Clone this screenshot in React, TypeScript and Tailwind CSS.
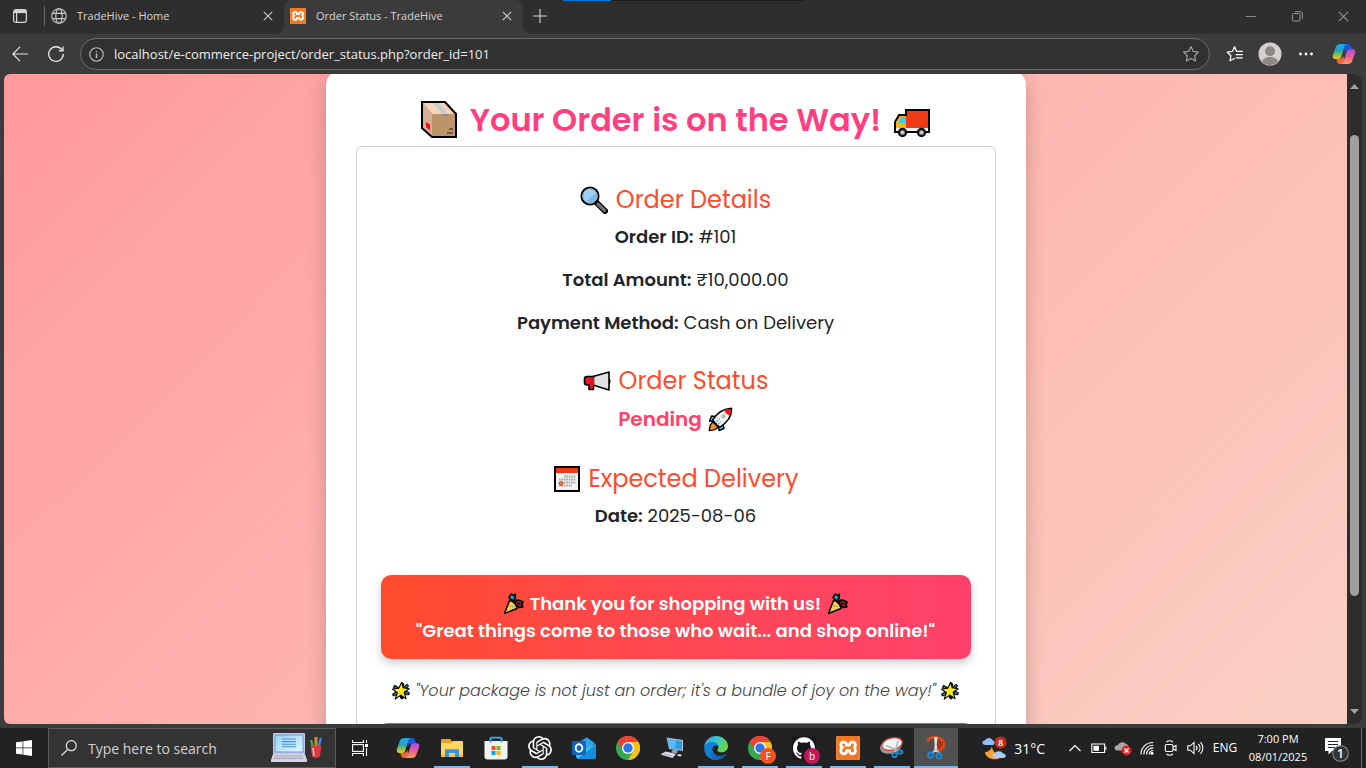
import React from "react";
import { SiGithub, SiOpenai, SiXampp } from "react-icons/si";

const CHROME_FONT = "font-['Segoe_UI','Open_Sans',sans-serif]";

/* ---------- Browser icons ---------- */

function TabActionsIcon() {
  return (
    <svg width="16" height="16" viewBox="0 0 16 16" fill="none" stroke="#d6d6d6" strokeWidth="1.2">
      <rect x="1.6" y="1.6" width="12.8" height="12.8" rx="2.5" />
      <path d="M2 4.2h12M4.6 5v9" />
      <path d="M2 3.6h12" strokeWidth="3" />
    </svg>
  );
}

function GlobeIcon() {
  return (
    <svg width="16" height="16" viewBox="0 0 16 16" fill="none" stroke="#c9c9c9" strokeWidth="1.1">
      <circle cx="8" cy="8" r="7.3" />
      <ellipse cx="8" cy="8" rx="3.2" ry="7.3" />
      <path d="M1.4 5.4h13.2M1.4 10.6h13.2" />
    </svg>
  );
}

function XamppIcon({ size }: { size: number }) {
  return (
    <span className="flex shrink-0 rounded-xs bg-white">
      <SiXampp size={size} color="#f37623" />
    </span>
  );
}

function CloseIcon({ size = 10, color = "#d0d0d0" }: { size?: number; color?: string }) {
  return (
    <svg width={size} height={size} viewBox="0 0 10 10" stroke={color} strokeWidth="1.1" fill="none">
      <path d="M.8.8l8.4 8.4M9.2.8L.8 9.2" />
    </svg>
  );
}

function StarIcon({ lines = false }: { lines?: boolean }) {
  return lines ? (
    <svg width="18" height="18" viewBox="0 0 18 18" fill="none" stroke="#fff" strokeWidth="1.2" strokeLinejoin="round" strokeLinecap="round">
      <path d="M10.6 6.4L8.6 1.8 6.3 6.5l-5 .7 3.6 3.5L4 15.8l4.4-2.3" />
      <path d="M10.6 6.4h5.8M10.2 9.6h6.2M10.2 12.8h6.2" />
    </svg>
  ) : (
    <svg width="18" height="18" viewBox="0 0 18 18" fill="none" stroke="#a2a2a2" strokeWidth="1.2" strokeLinejoin="round">
      <path d="M9 1.6l2.3 4.8 5.2.7-3.8 3.7.9 5.2L9 13.5 4.400 16l.9-5.200L1.500 7.100l5.200-.7z" />
    </svg>
  );
}

function CopilotIcon({ size = 24, id }: { size?: number; id: string }) {
  return (
    <svg width={size} height={size} viewBox="0 0 24 24">
      <defs>
        <linearGradient id={`${id}a`} x1="0" y1="0" x2="0" y2="1">
          <stop offset="0" stopColor="#19a9ee" />
          <stop offset=".45" stopColor="#2aa3b8" />
          <stop offset=".75" stopColor="#8cc04a" />
          <stop offset="1" stopColor="#f3c613" />
        </linearGradient>
        <linearGradient id={`${id}b`} x1="0" y1="0" x2="0" y2="1">
          <stop offset="0" stopColor="#a653e8" />
          <stop offset=".5" stopColor="#ee5a9a" />
          <stop offset="1" stopColor="#ffa056" />
        </linearGradient>
      </defs>
      <path d="M12 2h4.400c1.700 0 2.300 1 2.800 2.600L20 7.600h-4c-2 0-2.800 1-3.300 2.700L11 4z" fill="#1f55d6" />
      <path d="M12 22H8c-1.700 0-2.400-1-2.900-2.600L4.300 16.600h3.800c2 0 2.900-1 3.400-2.700L13 20z" fill="#f4633c" />
      <path d="M8.300 2H15c-1.600 0-2.300 1.200-2.800 2.900l-2.700 9c-.5 1.800-1.400 3-3.400 3H3.500C1.300 17 .3 15.400.9 13.200L3.700 5.300C4.500 3 5.900 2 8.300 2z" fill={`url(#${id}a)`} />
      <path d="M15.700 22H9c1.600 0 2.300-1.200 2.800-2.900l2.700-8.800c.5-1.800 1.400-3 3.400-3h2.600c2.200 0 3.200 1.600 2.600 3.800l-2.800 7.600c-.8 2.300-2.200 3.300-4.600 3.300z" fill={`url(#${id}b)`} />
    </svg>
  );
}

/* ---------- Emoji drawings ---------- */

function PackageEmoji() {
  return (
    <svg width="38" height="38" viewBox="0 0 38 38" strokeLinejoin="miter">
      <path d="M2 1h23l11 12v23H12L2 27z" fill="#bd936a" />
      <path d="M2 1h23l11 12H12z" fill="#f5d3bf" />
      <path d="M2 1l10 12v23L2 27z" fill="#daae91" />
      <path d="M12 1h6l10 12h-6z" fill="#c8cbcc" />
      <path d="M22 13h6v2h-6z" fill="#8b8f91" />
      <path d="M6 21l4 2.500v6L6 26z" fill="#e81224" />
      <path d="M29 28h4M27 32h6" stroke="#222" strokeWidth="1.200" />
      <path d="M2 1h23l11 12v23H12L2 27z" fill="none" stroke="#000" strokeWidth="2" />
    </svg>
  );
}

function TruckEmoji() {
  return (
    <svg width="38" height="38" viewBox="0 0 38 38">
      <path d="M13 9h23v22H2V21l4-7h7z" fill="#f03a17" stroke="#000" strokeWidth="2" />
      <path d="M3 21l4-6h6v14H3z" fill="#ffb900" />
      <path d="M4.500 22.500l3.500-6.500h5v6.500z" fill="#31d2f7" />
      <path d="M3 27h32v3H3z" fill="#f2f2f2" />
      <g stroke="#111" strokeWidth="2.200">
        <circle cx="9.500" cy="31.500" r="3.600" fill="#8b8f91" />
        <circle cx="28.500" cy="31.500" r="3.600" fill="#8b8f91" />
      </g>
      <circle cx="9.500" cy="31.500" r="1.200" fill="#eee" />
      <circle cx="28.500" cy="31.500" r="1.200" fill="#eee" />
    </svg>
  );
}

function MagnifierEmoji() {
  return (
    <svg width="28" height="28" viewBox="0 0 28 28">
      <path d="M17 17l8 8" stroke="#000" strokeWidth="6" strokeLinecap="round" />
      <path d="M18 18l6.500 6.500" stroke="#6d7276" strokeWidth="3.200" strokeLinecap="round" />
      <circle cx="10" cy="10" r="8.600" fill="#9fd0f5" stroke="#000" strokeWidth="2" />
      <circle cx="10" cy="10" r="7.200" fill="none" stroke="#9aa3aa" strokeWidth="1" />
      <path d="M15.800 7A6.600 6.600 0 016 15.200z" fill="#7ab9ee" />
    </svg>
  );
}

function MegaphoneEmoji() {
  return (
    <svg width="28" height="28" viewBox="0 0 28 28">
      <path d="M24.500 10.500c3 1.500 3 6 0 7.500" fill="#aaa" stroke="#000" strokeWidth="1.800" />
      <path d="M10 9.500L26 5v18l-16-5z" fill="#e2e2e2" stroke="#000" strokeWidth="1.600" strokeLinejoin="round" />
      <path d="M10.500 9.500H4c-1.500 0-2.500 1-2.500 2.500v3.500c0 1.500 1 2.500 2.500 2.500h2v4.500h4.500z" fill="#e81224" stroke="#000" strokeWidth="1.600" strokeLinejoin="round" />
      <path d="M10 10.400v8" stroke="#e81224" strokeWidth="2" />
    </svg>
  );
}

function CalendarEmoji() {
  return (
    <svg width="28" height="28" viewBox="0 0 28 28">
      <rect x="3" y="2" width="24" height="24" fill="#f4f4f4" stroke="#000" strokeWidth="2" />
      <path d="M4 3h22v5H4z" fill="#f03a17" />
      <path d="M12 11.500h12M7 14.500h17M7 17.500h17M7 20.500h13" stroke="#a8a8a8" strokeWidth="1.900" strokeDasharray="1.700 .7" />
      <path d="M9 16.500l2 2-2 2-2-2z" fill="none" stroke="#f03a17" strokeWidth="1.200" />
    </svg>
  );
}

function RocketEmoji() {
  return (
    <svg width="25" height="25" viewBox="0 0 25 25" strokeLinejoin="round">
      <path d="M7.500 9.500L3.500 9 1.500 14l4 .5zM15 17l1 4.500-5 2-.5-4.500z" fill="#4cc2e8" stroke="#000" strokeWidth="1.400" />
      <path d="M5 15c-2.500 1.500-3.500 5-3.600 8.600C5 23.500 8.500 22.500 10 20z" fill="#f7941d" stroke="#000" strokeWidth="1.400" />
      <path d="M23.500 1.300c.5 7.500-3 13.500-11.800 19L4.600 13.200C9.500 5.500 15.500 1.500 23.500 1.300z" fill="#f4f4f4" stroke="#000" strokeWidth="1.500" />
      <path d="M23 1.900c.1 2.600-.2 4.600-.9 6.600-3-.7-5.200-2.800-5.900-5.500 2-.8 4.400-1.100 6.800-1.100z" fill="#e81224" />
      <circle cx="15.500" cy="9.300" r="2.300" fill="#b8bcc0" />
      <path d="M7 16l5-4.500M9 18l4-3.500" stroke="#31a9e0" strokeWidth="1" />
    </svg>
  );
}

function PartyEmoji() {
  return (
    <svg width="21" height="22" viewBox="0 0 21 22" strokeLinejoin="round">
      <path d="M6.500 7.500L1.500 20.500l12.500-5c0-3.500-3.500-7.500-7.500-8z" fill="#f8cf4a" stroke="#000" strokeWidth="1.500" />
      <path d="M7.500 6.500L6 4l2.500-3 2 1.500L12.500 1 12 5.500 10.500 8z" fill="#0f8c9b" stroke="#000" strokeWidth="1.500" />
      <path d="M11.500 9.500l3-2.500 2.500.5L20 9l-1 2 .7 3-3.200.5-3-2z" fill="#8f2328" stroke="#000" strokeWidth="1.700" />
      <path d="M12 8.500l2-1.500M14 10.500h3.500" stroke="#000" strokeWidth="1.300" />
      <circle cx="9" cy="4" r="1" fill="#2fb6d8" />
      <circle cx="7" cy="13" r=".8" fill="#e0533d" />
      <circle cx="10" cy="13.500" r=".8" fill="#2a9fd0" />
    </svg>
  );
}

function StarEmoji() {
  return (
    <svg width="20" height="20" viewBox="0 0 20 20">
      <path d="M4 6l2.500 1.500M11.500 3.500l-1 2M16 5l-2.500 2.500M17 12.500l-3-1M11 16.500l-1-2M3 13.500l3-1.500" stroke="#000" strokeWidth="3.600" strokeLinecap="round" />
      <path d="M4 6l1.500 1M16 5l-1.500 1.500M16.800 12.500l-1.800-.7M3.200 13.500l2-1" stroke="#1c87b5" strokeWidth="1.500" strokeLinecap="round" />
      <path d="M10.700 1.200l1.500 5.600 6 .9-5 3.600 1.900 6.500-5.300-3.700-5.600 4 2.100-6.300L1.500 8l6.200-.7z" fill="#ffe81a" stroke="#000" strokeWidth="1.100" strokeLinejoin="round" />
    </svg>
  );
}

/* ---------- Taskbar icons ---------- */

function WindowsIcon() {
  return (
    <svg width="16" height="16" viewBox="0 0 16 16" fill="#fff">
      <path d="M0 2.300L6.600 1.400v6.200H0zM7.300 1.300L16 0v7.600H7.300zM0 8.300h6.600v6.300L0 13.700zM7.300 8.300H16V16l-8.700-1.300z" />
    </svg>
  );
}

function LaptopArt() {
  return (
    <svg width="54" height="32" viewBox="0 0 54 32">
      <defs>
        <linearGradient id="screen" x1="0" y1="0" x2="1" y2="1">
          <stop offset="0" stopColor="#8fd3f6" />
          <stop offset="1" stopColor="#e4f7fe" />
        </linearGradient>
      </defs>
      <rect x="2" y="1" width="32" height="21" rx="1" fill="#c3cbe6" />
      <rect x="4" y="3" width="28" height="17" fill="url(#screen)" stroke="#5b82c8" strokeWidth=".8" />
      <path d="M11 7h14M11 9.600h14M11 12.200h14M11 14.800h14" stroke="#4a8fd6" strokeWidth="1.100" />
      <path d="M2 22h32l2 6v2H0v-2z" fill="#d5d4e2" />
      <path d="M4 24h28M3 26.300h30" stroke="#9695ae" strokeWidth="1.200" strokeDasharray="1.600 .7" />
      <path d="M42 15l-2-7" stroke="#3faa50" strokeWidth="2.400" />
      <path d="M45 14V5" stroke="#c9922b" strokeWidth="3" />
      <path d="M47.500 15l2.500-9" stroke="#3f82cf" strokeWidth="2.600" />
      <path d="M39.500 13.500h11L49 24c-.3 2.500-7.700 2.500-8 0z" fill="#d93a40" />
      <path d="M42 16l1 8" stroke="#ffb0a8" strokeWidth="1.800" />
    </svg>
  );
}

function TaskViewIcon() {
  return (
    <svg width="17" height="16" viewBox="0 0 17 16" fill="none" stroke="#fff" strokeWidth="1.100">
      <path d="M.6 0v2.500h10.800V0M.6 16v-2.500h10.800V16M14.500 0v3M14.500 8v8" />
      <rect x=".6" y="4.600" width="10.800" height="6.800" />
      <rect x="13" y="4" width="3" height="3" fill="#fff" stroke="none" />
    </svg>
  );
}

function FolderIcon() {
  return (
    <svg width="24" height="24" viewBox="0 0 24 24">
      <path d="M1 4c0-.6.400-1 1-1h8l2 2v4H1z" fill="#e9a01b" />
      <path d="M1 7h10l2-2h9c.6 0 1 .4 1 1v14H1z" fill="#ffd767" />
      <path d="M1 18h22v3H1z" fill="#f6c445" />
      <path d="M5 21v-6.500c0-.8.600-1.300 1.300-1.300h11.400c.8 0 1.300.5 1.300 1.300V21h-4v-4H9v4z" fill="#3b93dd" />
    </svg>
  );
}

function StoreIcon() {
  return (
    <svg width="24" height="24" viewBox="0 0 24 24">
      <path d="M.5 5h23v15.500c0 2-1 3-3 3h-17c-2 0-3-1-3-3z" fill="#f1f1f1" />
      <path d="M6.500 6.500V2.500c0-.5.400-.9 1-.9h9c.6 0 1 .4 1 .9v4" fill="none" stroke="#27b4e8" strokeWidth="1.900" />
      <path d="M7.500 10h4v4h-4z" fill="#f25022" />
      <path d="M12.500 10h4v4h-4z" fill="#7fba00" />
      <path d="M7.500 15h4v4h-4z" fill="#00a4ef" />
      <path d="M12.500 15h4v4h-4z" fill="#ffb900" />
    </svg>
  );
}

function OutlookIcon() {
  return (
    <svg width="26" height="24" viewBox="0 0 26 24">
      <path d="M5 8L14.500 1.500c.6-.4 1.300-.4 1.900 0L25 7.500V12H5z" fill="#1767b5" />
      <path d="M9 6l7-4 7 5-4 7H9z" fill="#2fa7e6" />
      <path d="M25 8v12c0 1.700-1 3-3 3H8c-1.700 0-3-1-3-3v-7h9z" fill="#35c3f3" />
      <path d="M25 8L7 22.500c.4.300.8.500 1.500.5H22c2 0 3-1.300 3-3z" fill="#1490df" />
      <rect x="1" y="5" width="14" height="14" rx="1.300" fill="#0f64bd" />
      <ellipse cx="8" cy="12" rx="3.300" ry="3.800" fill="none" stroke="#fff" strokeWidth="1.900" />
    </svg>
  );
}

function ChromeIcon() {
  return (
    <svg width="24" height="24" viewBox="0 0 24 24">
      <circle cx="12" cy="12" r="12" fill="#34a853" />
      <path d="M1.600 6A12 12 0 0122.400 6L12 12z" fill="#ea4335" />
      <path d="M1.600 6L7 15l5-3 2-6z" fill="#ea4335" />
      <path d="M22.400 6A12 12 0 0112 24l5.300-9L12 6z" fill="#fbc116" />
      <path d="M1.600 6L6.800 15l2.700 2.500L12 12 6 8z" fill="#34a853" />
      <path d="M1.600 6A12 12 0 0122.400 6H12c-3 0-5.200 2-5.700 4.500L6 13.500z" fill="#ea4335" />
      <circle cx="12" cy="12" r="6" fill="#fff" />
      <circle cx="12" cy="12" r="4.700" fill="#2f77e8" />
    </svg>
  );
}

function ComputerIcon() {
  return (
    <svg width="24" height="24" viewBox="0 0 24 24">
      <path d="M6.500 1.500L23 4v11L9 13z" fill="#b9c4cc" />
      <path d="M7.500 2.500L22 5v9L9.500 12z" fill="#2f9be6" />
      <path d="M7.500 2.500L16 4 15 12.900 9.500 12z" fill="#5cbaf5" />
      <path d="M13 13.600l5 .8-1 3-6-1z" fill="#9aa1a7" />
      <path d="M5.500 15.500L16 18l-3.500 4L.5 18.500z" fill="#dfe3e6" />
      <path d="M4 17.800l9.500 2.700" stroke="#a5acb1" strokeWidth="1.200" />
      <path d="M18.500 18l3.500.8-1.500 1.700-3.500-.8z" fill="#dfe3e6" />
    </svg>
  );
}

function EdgeIcon() {
  return (
    <svg width="24" height="24" viewBox="0 0 24 24">
      <defs>
        <linearGradient id="edgeTop" x1="0" y1="0" x2="1" y2=".4">
          <stop offset="0" stopColor="#2aa8e8" />
          <stop offset=".5" stopColor="#36c5d4" />
          <stop offset="1" stopColor="#65d845" />
        </linearGradient>
        <linearGradient id="edgeLow" x1="0" y1="0" x2="1" y2="1">
          <stop offset="0" stopColor="#1683d8" />
          <stop offset="1" stopColor="#0e4f9e" />
        </linearGradient>
      </defs>
      <path d="M.2 10.500C1 4.300 6 0 12 0c7 0 12 5 12 10 0 4-3 6.300-6.300 6.300-2.400 0-4.500-.9-4.500-2.100 0-.8 1.200-1.100 1.200-3C14.400 9 12 7.300 9 7.300c-4 0-7.300 1.400-8.800 3.200z" fill="url(#edgeTop)" />
      <path d="M.1 11C1 8 4.500 6 8.500 6c3.500 0 5.900 2.200 5.900 5 0-1.300-1.400-2-3-1.500C8.500 10.500 7 13 7.500 16c.6 4 3.500 6.500 7 7.600C7 25.500 0 20 .1 11z" fill="#1481d4" />
      <path d="M8.800 11.200c-1 3.300.8 8 6.200 8.500 2.400.2 4.700-.5 6.700-1.800.5-.3.900.2.600.7C20.200 22 16.800 24 13 24c-5.500 0-8.300-5-6.800-9 .5-1.600 1.500-3 2.600-3.800z" fill="url(#edgeLow)" />
    </svg>
  );
}

function SnippingIcon() {
  return (
    <svg width="24" height="24" viewBox="0 0 24 24">
      <ellipse cx="11" cy="10.500" rx="11" ry="7" fill="#9c9c9c" transform="rotate(-14 11 11)" />
      <ellipse cx="12" cy="8" rx="10.500" ry="6" fill="#f5f5f5" stroke="#e23a33" strokeWidth="1.300" transform="rotate(-14 12 8)" />
      <path d="M6 9.500l11 4.500M18 5l-3 11" stroke="#b5b5b5" strokeWidth="1.600" />
      <g fill="none" stroke="#1c8bd0" strokeWidth="1.800">
        <circle cx="14.500" cy="19" r="2.200" />
        <ellipse cx="20" cy="16" rx="2.500" ry="1.700" />
      </g>
    </svg>
  );
}

function SnipSketchIcon() {
  return (
    <svg width="24" height="24" viewBox="0 0 24 24">
      <path d="M12 2c5-1 9 2 8.500 6.500-.4 4-4 6.500-8.500 7z" fill="#a83319" />
      <path d="M3.500 6c1-4 4.500-5.300 9-4.500 5 .6 8 3.500 7.500 7-.4 3.500-3.500 6-7 6.500" fill="none" stroke="#dc4618" strokeWidth="2.800" />
      <path d="M11 1l1.500 15M12.500 1L11 16" stroke="#e6e6e6" strokeWidth="2" />
      <path d="M11.500 13l4 4M11.500 13L8.500 17" stroke="#bdbdbd" strokeWidth="1.500" />
      <g fill="none" stroke="#1488d8" strokeWidth="2">
        <circle cx="6.500" cy="19" r="2.500" />
        <circle cx="15" cy="20" r="2.500" />
      </g>
    </svg>
  );
}

function WeatherIcon() {
  return (
    <svg width="26" height="24" viewBox="0 0 26 24">
      <path d="M10 10c0 6 5 9 12 8-2 4-7 6-12 5-4-1-7-4-7-7 3 0 6-2 7-6z" fill="#f7a233" />
      <path d="M4 9C1 9 0 7.500.5 6 1 4.800 2 4.400 3 4.500 4 1.500 9 1 10.500 4.200c2.500 0 3 4.800 0 4.800z" fill="#93bdf8" />
      <path d="M14 22c-3 0-4-1.500-3.500-3 .4-1 1.400-1.500 2.500-1.400 1-3 6.500-3.400 8 0 3.500 0 4 4.400 0 4.400z" fill="#a9ccfb" />
      <circle cx="18.500" cy="6.500" r="6" fill="#c62a20" />
      <text x="18.500" y="9.800" textAnchor="middle" fontSize="9" fontWeight="600" fill="#fff" fontFamily="Open Sans">8</text>
    </svg>
  );
}

function BatteryIcon() {
  return (
    <svg width="16" height="12" viewBox="0 0 16 12" fill="none" stroke="#fff" strokeWidth="1.100">
      <path d="M.8 2h12.800v8.500H.800z" />
      <path d="M14.800 4.500v3.500" />
      <path d="M2.500 3.800h5.500v5H2.500z" fill="#fff" stroke="none" />
    </svg>
  );
}

function CloudErrorIcon() {
  return (
    <svg width="18" height="16" viewBox="0 0 18 16">
      <path d="M4 10.500C1 10.500 0 8.500 1 6.700 1.600 5.500 3 5 4 5.300 5 1.800 10 1 12 4c3 .2 4 6.500 0 6.500z" fill="#a9a9a9" />
      <circle cx="12.500" cy="10.500" r="5" fill="#d4272e" />
      <path d="M10.500 8.500l4 4M14.500 8.500l-4 4" stroke="#fff" strokeWidth="1.500" />
    </svg>
  );
}

function WifiIcon() {
  return (
    <svg width="14" height="14" viewBox="0 0 14 14" fill="none" stroke="#fff" strokeWidth="1.100">
      <path d="M1 13.500C1 6.500 6 1.500 13.300 1.500M3.800 13.500c0-5.500 4-9.300 9.500-9.300M6.600 13.500c0-4 2.800-6.600 6.700-6.600M9.200 13.500c0-2.500 1.600-4 4.100-4" />
      <circle cx="12" cy="12.300" r="1.500" fill="#fff" stroke="none" />
    </svg>
  );
}

function MeetNowIcon() {
  return (
    <svg width="14" height="16" viewBox="0 0 14 16" fill="none" stroke="#fff" strokeWidth="1.100">
      <rect x="1.300" y="4.500" width="7.700" height="7" rx="1.500" />
      <path d="M9 7l3-1.500v5L9 9M2.500 2c2-1.500 4.500-1.500 6.500 0M2.500 14c2 1.500 4.500 1.500 6.500 0" />
    </svg>
  );
}

function SpeakerIcon() {
  return (
    <svg width="17" height="14" viewBox="0 0 17 14" fill="none" stroke="#fff" strokeWidth="1.100">
      <path d="M.8 4.800h2.500L7 1.400v11.200L3.300 9.200H.8zM9 4.800c1.200 1.300 1.200 3.100 0 4.400M11.300 3c2.200 2.300 2.200 5.700 0 8M13.500 1.200c3.100 3.300 3.100 8.300 0 11.600" />
    </svg>
  );
}

function NotificationIcon() {
  return (
    <svg width="26" height="26" viewBox="0 0 26 26">
      <path d="M1 1h16v13H8l-3.500 3.500V14H1z" fill="#fff" />
      <path d="M4 4.500h10M4 7.500h10M4 10.500h7" stroke="#262626" strokeWidth="1.100" />
      <circle cx="16.500" cy="16.500" r="7.800" fill="#333" stroke="#8d8d8d" strokeWidth="1.100" />
      <text x="16.500" y="21" textAnchor="middle" fontSize="12" fontWeight="600" fill="#fff" fontFamily="Open Sans">1</text>
    </svg>
  );
}

function BadgedIcon({ children, label, className }: { children: React.ReactNode; label: string; className: string }) {
  return (
    <span className="relative flex">
      {children}
      <span className={`absolute -right-1 -bottom-1 flex size-4 items-center justify-center rounded-full text-[10px] leading-none text-white ${className}`}>
        {label}
      </span>
    </span>
  );
}

const taskbarApps: { name: string; icon: React.ReactNode; open?: boolean; active?: boolean }[] = [
  { name: "Copilot", icon: <CopilotIcon size={24} id="taskCopilot" /> },
  { name: "File Explorer", icon: <FolderIcon />, open: true },
  { name: "Microsoft Store", icon: <StoreIcon /> },
  { name: "ChatGPT", icon: <SiOpenai size={24} color="#fff" />, open: true },
  { name: "Outlook", icon: <OutlookIcon /> },
  { name: "Google Chrome", icon: <ChromeIcon /> },
  { name: "Remote computer", icon: <ComputerIcon /> },
  { name: "Microsoft Edge", icon: <EdgeIcon />, open: true },
  { name: "Chrome, profile F", icon: <BadgedIcon label="F" className="bg-[#f4511e]"><ChromeIcon /></BadgedIcon>, open: true },
  {
    name: "GitHub, profile b",
    icon: (
      <BadgedIcon label="b" className="bg-[#c2185b]">
        <span className="flex size-6 items-center justify-center bg-[#17191c]"><SiGithub size={22} color="#fff" /></span>
      </BadgedIcon>
    ),
    open: true,
  },
  { name: "XAMPP", icon: <XamppIcon size={24} />, open: true },
  { name: "Snipping Tool", icon: <SnippingIcon />, open: true },
  { name: "Snip & Sketch", icon: <SnipSketchIcon />, open: true, active: true },
];

/* ---------- Browser ---------- */

function TabStrip() {
  return (
    <div className="relative flex h-[34px] shrink-0 bg-[#3b3b3b] text-[11px] text-[#d6d6d6]">
      <div className="flex w-[284px] items-center rounded-br-lg bg-[#2e2e2e] pb-0.5">
        <button aria-label="Tab actions" className="ml-3 flex"><TabActionsIcon /></button>
        <span className="mr-1.5 ml-4 h-5 w-px bg-[#6a6a6a]" />
        <GlobeIcon />
        <a href="#home" className="ml-2.5 flex-1 whitespace-nowrap">TradeHive - Home</a>
        <button aria-label="Close TradeHive - Home" className="mr-[11px] flex"><CloseIcon /></button>
      </div>
      <div className="w-[239px] bg-linear-to-b from-[#2e2e2e] from-50% to-[#3b3b3b] to-50%">
        <div className="flex h-full items-center rounded-t-lg bg-[#3b3b3b] pb-0.5 pl-1.5">
          <XamppIcon size={16} />
          <a href="#order" className="ml-2.5 flex-1 whitespace-nowrap">Order Status - TradeHive</a>
          <button aria-label="Close Order Status - TradeHive" className="mr-[11px] flex"><CloseIcon /></button>
        </div>
      </div>
      <div className="flex flex-1 items-center rounded-bl-lg bg-[#2e2e2e] pb-0.5">
        <button aria-label="New tab" className="ml-2.5 flex">
          <svg width="14" height="14" viewBox="0 0 14 14" stroke="#d6d6d6" strokeWidth="1.100"><path d="M7 0v14M0 7h14" /></svg>
        </button>
        <div className="ml-auto flex items-center">
          <button aria-label="Minimize" className="flex w-[46px] justify-center"><span className="h-px w-2.5 bg-[#8a8a8a]" /></button>
          <button aria-label="Restore" className="flex w-[46px] justify-center">
            <svg width="11" height="11" viewBox="0 0 11 11" fill="none" stroke="#8f8f8f"><rect x=".5" y="2.500" width="7.500" height="7.500" rx="1" /><path d="M2.800.7H9c.8 0 1.300.5 1.300 1.300v6" /></svg>
          </button>
          <button aria-label="Close window" className="flex w-[46px] justify-center"><CloseIcon color="#8f8f8f" size={11} /></button>
        </div>
      </div>
      <div className="absolute top-0 left-[563px] flex h-px w-[241px] bg-[#1c1c1c]"><span className="w-12 bg-[#0078d4]" /></div>
    </div>
  );
}

function Toolbar() {
  return (
    <div className="flex h-10 shrink-0 items-center bg-[#3b3b3b] pl-3">
      <button aria-label="Back" className="flex">
        <svg width="16" height="16" viewBox="0 0 16 16" fill="none" stroke="#e8e8e8" strokeWidth="1.200"><path d="M16 8H.8M8 .8L.8 8 8 15.200" /></svg>
      </button>
      <button aria-label="Refresh" className="ml-5 flex">
        <svg width="16" height="16" viewBox="0 0 16 16" fill="none" stroke="#e8e8e8" strokeWidth="1.300"><path d="M15.300 8A7.300 7.300 0 1113.800 3.600L15 4.800M15 .5v4.300h-4.300" /></svg>
      </button>
      <div className="ml-4 flex h-8 flex-1 items-center rounded-full border border-[#6b6b6b] bg-[#313131] px-2">
        <svg width="15" height="15" viewBox="0 0 15 15" fill="none" stroke="#bdbdbd" strokeWidth="1.100"><circle cx="7.500" cy="7.500" r="6.700" /><path d="M7.500 6.500v4.500M7.500 4v1.300" strokeWidth="1.400" /></svg>
        <input
          aria-label="Address"
          defaultValue="localhost/e-commerce-project/order_status.php?order_id=101"
          className="ml-2.5 min-w-0 flex-1 bg-transparent pt-0.5 text-[13px] text-[#ececec] outline-none"
        />
        <button aria-label="Add to favorites" className="mr-px flex"><StarIcon /></button>
      </div>
      <button aria-label="Favorites" className="ml-4 flex"><StarIcon lines /></button>
      <button aria-label="Profile" className="ml-3.5 flex">
        <svg width="24" height="24" viewBox="0 0 24 24">
          <defs><clipPath id="avatar"><circle cx="12" cy="12" r="11" /></clipPath></defs>
          <circle cx="12" cy="12" r="11.500" fill="#d5d2ce" />
          <g fill="#8d8884" clipPath="url(#avatar)"><circle cx="12" cy="9.300" r="5" /><ellipse cx="12" cy="20" rx="8" ry="5" /></g>
        </svg>
      </button>
      <button aria-label="Settings and more" className="ml-4 flex">
        <svg width="16" height="4" viewBox="0 0 16 4" fill="#fff"><circle cx="2.500" cy="2" r="1.400" /><circle cx="8" cy="2" r="1.400" /><circle cx="13.500" cy="2" r="1.400" /></svg>
      </button>
      <button aria-label="Copilot" className="mr-2.5 ml-4.5 flex"><CopilotIcon size={24} id="barCopilot" /></button>
    </div>
  );
}

function SectionTitle({ icon, children }: { icon: React.ReactNode; children: React.ReactNode }) {
  return (
    <h3 className="mb-2 flex h-[30px] items-center justify-center gap-2 text-[24px] leading-[30px] text-[#ff4b2b]">
      {icon}
      {children}
    </h3>
  );
}

function OrderPage() {
  return (
    <main className="flex-1 overflow-hidden rounded-l-md bg-linear-135 from-[#ff9a9e] to-[#fad0c4] font-['Poppins','Inter',sans-serif] text-[#212529]">
      <div className="mx-auto -mt-1 max-w-[700px] rounded-[15px] bg-white p-[30px] text-center shadow-[0_8px_20px_rgba(0,0,0,0.2)]">
        <h1 className="mb-1.5 flex h-10 items-center justify-center gap-3 text-[32px] font-semibold whitespace-nowrap text-[#ff3f81]">
          <PackageEmoji />
          Your Order is on the Way!
          <TruckEmoji />
        </h1>
        <div className="rounded-md border border-[#d0d0d0] px-6 pt-[38px] pb-6">
          <div className="flex flex-col gap-[30px] text-[18px] leading-[27px]">
            <section>
              <SectionTitle icon={<MagnifierEmoji />}>Order Details</SectionTitle>
              <div className="flex flex-col gap-4">
                <p><strong className="font-semibold">Order ID:</strong> #101</p>
                <p><strong className="font-semibold">Total Amount:</strong> ₹10,000.00</p>
                <p><strong className="font-semibold">Payment Method:</strong> Cash on Delivery</p>
              </div>
            </section>
            <section>
              <SectionTitle icon={<MegaphoneEmoji />}>Order Status</SectionTitle>
              <p className="flex h-[30px] items-center justify-center gap-1.5 text-[20px] font-semibold text-[#ff416c]">
                Pending
                <RocketEmoji />
              </p>
            </section>
            <section>
              <SectionTitle icon={<CalendarEmoji />}>Expected Delivery</SectionTitle>
              <p><strong className="font-semibold">Date:</strong> 2025-08-06</p>
            </section>
          </div>
          <div className="mt-[46px] rounded-[10px] bg-linear-to-r from-[#ff4b2b] to-[#ff416c] p-[15px] text-[18px] leading-[27px] font-semibold text-white shadow-[0_4px_10px_rgba(0,0,0,0.2)]">
            <p className="flex items-center justify-center gap-1.5">
              <PartyEmoji />
              Thank you for shopping with us!
              <PartyEmoji />
            </p>
            <p>"Great things come to those who wait... and shop online!"</p>
          </div>
          <p className="mt-5 flex h-6 items-center justify-center gap-1 text-[16px] whitespace-nowrap text-[#444]">
            <StarEmoji />
            <em className="font-light">"Your package is not just an order; it's a bundle of joy on the way!"</em>
            <StarEmoji />
          </p>
          <a href="#home" aria-label="Back to home" className="mt-5 block h-12 rounded-md bg-linear-to-r from-[#ff416c] to-[#ff4b2b]" />
        </div>
      </div>
    </main>
  );
}

function Scrollbar() {
  return (
    <div className="flex w-[15px] flex-col items-center rounded-r-lg bg-[#2c2c2c] py-2.5" aria-hidden="true">
      <svg width="9" height="5" viewBox="0 0 9 5" fill="#a0a0a0"><path d="M4.500 0L9 5H0z" /></svg>
      <div className="mt-[46px] h-[461px] w-[9px] rounded-full bg-[#9f9f9f]" />
      <svg className="mt-auto" width="9" height="5" viewBox="0 0 9 5" fill="#a0a0a0"><path d="M4.500 5L9 0H0z" /></svg>
    </div>
  );
}

function Taskbar() {
  return (
    <footer className="flex h-10 shrink-0 bg-[#222] text-white">
      <button aria-label="Start" className="flex w-12 items-center justify-center"><WindowsIcon /></button>
      <label className="flex w-[288px] items-center border border-[#5a5a5a] bg-[#333] pr-2.5 pl-3">
        <svg width="16" height="16" viewBox="0 0 16 16" fill="none" stroke="#e6e6e6" strokeWidth="1.200"><circle cx="10.300" cy="5.700" r="5" /><path d="M6.700 9.300L.5 15.500" /></svg>
        <input aria-label="Search" placeholder="Type here to search" className="ml-[11px] min-w-0 flex-1 bg-transparent text-[14px] outline-none placeholder:text-[#d2d2d2]" />
        <LaptopArt />
      </label>
      <button aria-label="Task view" className="mr-0.5 flex w-12 items-center justify-center"><TaskViewIcon /></button>
      {taskbarApps.map((app) => (
        <button key={app.name} aria-label={app.name} className={`relative flex w-11 items-center justify-center ${app.active ? "bg-[#505050]" : ""}`}>
          {app.icon}
          {app.open && <span className={`absolute inset-x-0 bottom-0 h-0.5 bg-[#76b9ed] ${app.active ? "" : "mx-1"}`} />}
        </button>
      ))}
      <div className="ml-auto flex items-center text-[12px]">
        <button className="mr-[18px] flex items-center gap-1.5 text-[14px]"><WeatherIcon />31°C</button>
        <button aria-label="Show hidden icons" className="flex w-6 justify-center">
          <svg width="12" height="8" viewBox="0 0 12 8" fill="none" stroke="#fff" strokeWidth="1.200"><path d="M.5 7L6 1.500 11.500 7" /></svg>
        </button>
        <button aria-label="Battery" className="flex w-6 justify-center"><BatteryIcon /></button>
        <button aria-label="OneDrive" className="flex w-6 justify-center"><CloudErrorIcon /></button>
        <button aria-label="Network" className="flex w-6 justify-center"><WifiIcon /></button>
        <button aria-label="Meet now" className="flex w-6 justify-center"><MeetNowIcon /></button>
        <button aria-label="Volume" className="flex w-6 justify-center"><SpeakerIcon /></button>
        <button className="w-9 text-center">ENG</button>
        <button className="w-[70px] text-center text-[11px] leading-[18px]">7:00 PM<br />08/01/2025</button>
        <button aria-label="Notifications" className="flex w-12 justify-center pt-1"><NotificationIcon /></button>
        <span className="mr-1 h-10 w-px bg-[#6a6a6a]" />
      </div>
    </footer>
  );
}

export default function App() {
  return (
    <div className={`flex h-screen flex-col overflow-hidden bg-[#3b3b3b] ${CHROME_FONT}`}>
      <TabStrip />
      <Toolbar />
      <div className="flex min-h-0 flex-1 px-1 pb-1">
        <OrderPage />
        <Scrollbar />
      </div>
      <Taskbar />
    </div>
  );
}
